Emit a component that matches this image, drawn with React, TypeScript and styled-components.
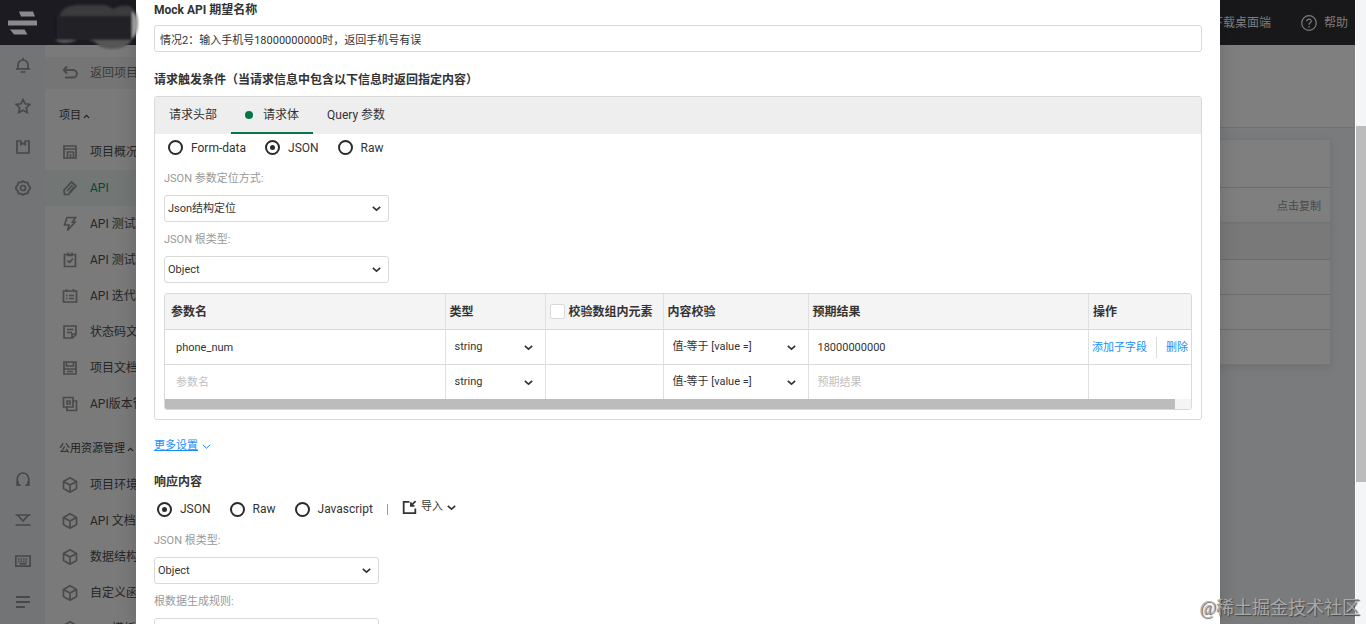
import React from "react";
import styled, { createGlobalStyle, css } from "styled-components";

const GlobalStyle = createGlobalStyle`
  * { box-sizing: border-box; }
  html, body, #root { height: 100%; }
  body {
    margin: 0;
    overflow: hidden;
    background: #797b7c;
    color: #333;
    font: 12px/20px Roboto, "Noto Sans CJK SC", sans-serif;
  }
  button, input, select { font: inherit; color: inherit; }
`;

/* ---------- frame ---------- */

const Page = styled.div`
  position: relative;
  display: flex;
  height: 100%;
  overflow: hidden;
`;

const Workspace = styled.div`
  flex: 1;
  min-width: 0;
  display: flex;
  flex-direction: column;
`;

const TopBar = styled.header`
  flex: none;
  height: 45px;
  display: flex;
  align-items: center;
  justify-content: space-between;
  padding: 0 7px 0 8px;
  background: linear-gradient(90deg, #1c1b21 136px, #18181a 200px);
  color: #7d7d7f;
`;

const TopLinks = styled.div`
  display: flex;
  align-items: center;
  gap: 30px;
`;

const TopButton = styled.button`
  display: flex;
  align-items: center;
  gap: 7px;
  padding: 0;
  border: 0;
  background: none;
`;

const Columns = styled.div`
  flex: 1;
  min-height: 0;
  display: flex;
`;

const Rail = styled.nav`
  flex: none;
  width: 45px;
  display: flex;
  flex-direction: column;
  justify-content: space-between;
  padding-bottom: 1px;
  background: #727475;
`;

const RailButton = styled.button`
  width: 45px;
  height: 41px;
  display: grid;
  place-items: center;
  padding: 0 0 1px;
  border: 0;
  background: none;
  color: #46484a;
`;

const Side = styled.nav`
  flex: none;
  width: 200px;
  overflow: hidden;
  padding-top: 12px;
  background: #7a7a7a;
`;

const SideTitle = styled.button`
  display: flex;
  align-items: center;
  gap: 2px;
  height: 36px;
  margin-top: 9px;
  padding: 0 0 0 14px;
  border: 0;
  background: none;
  font-size: 11px;
  color: #222;
`;

const SideLink = styled.a<{ $state?: "active" | "back" }>`
  display: flex;
  align-items: center;
  gap: 12px;
  height: 36px;
  padding-left: 17px;
  color: #262626;
  text-decoration: none;
  white-space: nowrap;
  svg { color: #4a4a4a; }
  ${(p) => p.$state === "active" && css`background: #727675; color: #044a32;`}
  ${(p) => p.$state === "back" && css`
    height: 32px;
    background: #757575;
    color: #3a3a3a;
  `}
`;

const Main = styled.main`
  flex: 1;
  background: #797b7c;
`;

const MainHead = styled.div`
  height: 83px;
  background: #7f7f7f;
  border-bottom: 1px solid #707070;
`;

const Card = styled.div`
  margin: 11px 24px 0 20px;
  background: #7f7f7f;
  border: 1px solid #757575;
  box-shadow: 0 2px 6px #6f7172;
  color: #484848;
  font-size: 11px;
  & + & { margin-top: 0; }
`;

const CardRow = styled.div<{ $tall?: boolean; $head?: boolean }>`
  display: flex;
  align-items: center;
  justify-content: flex-end;
  height: ${(p) => (p.$tall ? 47 : 35)}px;
  padding: 4px 9px 0 0;
  background: ${(p) => (p.$head ? "#797979" : "none")};
  & + & { border-top: 1px solid #6c6c6c; }
`;

const VTrack = styled.div`
  flex: none;
  width: 11px;
  display: flex;
  flex-direction: column;
  background: #f4f5f6;
  border-left: 1px solid #fff;
`;

const Share = styled.div<{ $n: number; $thumb?: boolean }>`
  flex: ${(p) => p.$n} 0 0;
  background: ${(p) => (p.$thumb ? "#bcbcbc" : "none")};
`;

const Smudge = styled.svg`
  position: absolute;
  left: 45px;
  top: 0;
  z-index: 3;
  pointer-events: none;
`;

const Watermark = styled.div`
  position: absolute;
  right: 6px;
  bottom: 4px;
  z-index: 3;
  font: 18px/24px "Liberation Serif", "Noto Sans CJK SC", serif;
  color: #a9a9a9;
  text-shadow: 1px 1px 1px #444;
`;

/* ---------- drawer ---------- */

const Drawer = styled.section`
  position: absolute;
  inset: 0 146px 0 136px;
  z-index: 2;
  overflow: hidden;
  padding: 0 18px;
  background: #fff;
  box-shadow: 0 0 20px rgba(0, 0, 0, 0.15);
`;

const Title = styled.label`
  display: block;
  padding-bottom: 5px;
  font-weight: 700;
`;

const Heading = styled.h2<{ $first?: boolean }>`
  margin: ${(p) => (p.$first ? "18px 0 6px" : "0")};
  font-size: 12px;
  line-height: 20px;
  font-weight: 700;
`;

const TextInput = styled.input`
  display: block;
  width: 100%;
  height: 27px;
  padding: 0 5px;
  border: 1px solid #d9d9d9;
  border-radius: 3px;
  background: #fff;
  font-size: 11px;
`;

const Panel = styled.div`
  border: 1px solid #d9d9d9;
  border-radius: 3px;
`;

const Tabs = styled.div`
  display: flex;
  height: 37px;
  background: #eee;
`;

const Tab = styled.button<{ $active?: boolean }>`
  display: flex;
  align-items: center;
  gap: 10px;
  padding: 0 14px;
  border: 0;
  border-bottom: 2px solid ${(p) => (p.$active ? "#067647" : "transparent")};
  background: none;
`;

const Dot = styled.span`
  width: 8px;
  height: 8px;
  border-radius: 50%;
  background: #067647;
`;

const PanelBody = styled.div`
  padding: 0 9px 9px;
`;

const RadioRow = styled.div<{ $loose?: boolean }>`
  display: flex;
  align-items: center;
  gap: 19px;
  height: ${(p) => (p.$loose ? 31 : 27)}px;
  padding: ${(p) => (p.$loose ? "3px 0 0 3px" : "0 0 0 4px")};
`;

const RadioLabel = styled.label`
  display: flex;
  align-items: center;
  gap: 8px;
`;

const RadioInput = styled.input`
  appearance: none;
  width: 15px;
  height: 15px;
  margin: 0;
  display: grid;
  place-items: center;
  border: 2px solid #2b2b2b;
  border-radius: 50%;
  &:checked::after {
    content: "";
    width: 5px;
    height: 5px;
    border-radius: 50%;
    background: #2b2b2b;
  }
`;

const Divider = styled.span`
  width: 1px;
  height: 11px;
  margin: 0 -5px;
  background: #999;
`;

const ImportButton = styled.button`
  display: flex;
  align-items: center;
  gap: 4px;
  padding: 0 0 4px;
  border: 0;
  background: none;
  font-size: 11px;
`;

const FieldLabel = styled.label`
  display: block;
  height: 34px;
  line-height: 36px;
  font-size: 11px;
  color: #999;
`;

const SelectBox = styled.span<{ $bare?: boolean }>`
  display: grid;
  align-items: center;
  width: ${(p) => (p.$bare ? "100%" : "225px")};
  svg {
    grid-area: 1 / 1;
    justify-self: end;
    margin-right: ${(p) => (p.$bare ? 12 : 8)}px;
    pointer-events: none;
  }
  select {
    grid-area: 1 / 1;
    appearance: none;
    width: 100%;
    height: 27px;
    padding: 0 3px;
    border: 1px solid #d9d9d9;
    border-radius: 3px;
    background: #fff;
    font-size: 11px;
    ${(p) => p.$bare && css`border: 0; padding: 0 9px;`}
  }
`;

const TableBox = styled.div`
  margin-top: 10px;
  border: 1px solid #d9d9d9;
  border-radius: 3px;
  overflow: hidden;
`;

const Table = styled.table`
  width: 100%;
  table-layout: fixed;
  border-collapse: separate;
  border-spacing: 0;
  font-size: 11px;
  th, td {
    padding: 0;
    border-bottom: 1px solid #d9d9d9;
    border-right: 1px solid #e0e0e0;
    text-align: left;
  }
  th:last-child, td:last-child { border-right: 0; }
  th {
    height: 36px;
    padding-left: 4px;
    background: #f4f4f4;
    font-size: 12px;
  }
  th:first-child { padding-left: 6px; }
  td { height: 35px; }
  tr:last-child td { height: 34px; border-bottom: 0; }
`;

const Col = styled.col<{ $w?: number }>`
  width: ${(p) => (p.$w ? `${p.$w}px` : "auto")};
`;

const CheckLabel = styled.label`
  display: flex;
  align-items: center;
  gap: 4px;
  white-space: nowrap;
`;

const CheckInput = styled.input`
  appearance: none;
  flex: none;
  width: 15px;
  height: 15px;
  margin: 0;
  border: 1px solid #d9d9d9;
  border-radius: 2px;
  background: #fff;
`;

const CellInput = styled.input<{ $wide?: boolean }>`
  display: block;
  width: 100%;
  height: 27px;
  padding: 0 ${(p) => (p.$wide ? 11 : 9)}px;
  border: 0;
  background: none;
  font-size: 11px;
  &::placeholder { color: #bfbfbf; opacity: 1; }
`;

const Actions = styled.div`
  display: flex;
  align-items: center;
  padding-left: 3px;
  white-space: nowrap;
`;

const LinkButton = styled.button`
  padding: 1px 0 0;
  border: 0;
  background: none;
  color: #1890ff;
  font-size: 11px;
  & + & {
    margin-left: 9px;
    padding-left: 9px;
    border-left: 1px solid #ddd;
  }
`;

const HTrack = styled.div`
  display: flex;
  height: 10px;
  background: #f4f4f4;
`;

const More = styled.a`
  display: flex;
  align-items: center;
  gap: 4px;
  height: 52px;
  color: #1890ff;
  font-size: 11px;
  text-decoration: none;
  span { text-decoration: underline; }
`;

/* ---------- icons ---------- */

const shapes: Record<string, React.ReactNode> = {
  bell: <path d="M3 11.500V8a5 5 0 0 1 10 0v3.500M1 11.800h14M8 3V.8M5.500 15h5" />,
  star: <path d="m8 1.500 2 4.300 4.800.6-3.500 3.300.9 4.800L8 12.200l-4.200 2.300.9-4.800L1.200 6.400 6 5.800z" />,
  box: <path d="M5.500 2H2v12h12V2h-3.500M5.800 1.500v4L8 4.300l2.200 1.200v-4" />,
  gear: <><path d="M8 1l2 1.500 2.600-.1.6 2.500L15 7v2l-1.800 2-.6 2.600-2.600-.1L8 15l-2-1.500-2.600.1-.6-2.600L1 9V7l1.800-2.100.6-2.500 2.600.1z" /><circle cx="8" cy="8" r="2.500" /></>,
  headset: <path d="M5.500 14.200H2.200V8a5.800 6 0 0 1 11.600 0v6.200h-3.300M3 10v4M13 10v4" />,
  down: <path d="M.5 3h15M3 3.500l5 5.500 5-5.500M.5 13h15" />,
  keyboard: <><path d="M.8 3h14.400v10.200H.8z" /><path d="M3 6h10M3 8.300h10" strokeDasharray="1.500 1" /><path d="M4.500 10.700h7" /></>,
  lines: <path d="M1 3h14M1 8h14M1 13h9" strokeWidth="2" />,
  back: <path d="M5 1.500 1.800 5 5 8.500M2 5h9a3.800 3.800 0 0 1 0 7.600H3" strokeWidth="2" />,
  overview: <path d="M2 2h12v12H2zM2 5h12M5.500 14V8M8.500 14v-4M11.500 14V8M4.500 8H12" />,
  link: <path d="m2 10 7.500-8 4.500 4-7.500 8.500H2.500zM5 11l5.500-6M7.500 12.500 12 7" />,
  bolt: <path d="M5 1.500h8.500L10.500 6H13L5.500 14.500 7 9H2.500z" />,
  clip: <path d="M2.500 2.500h11v12h-11zM6 .5v3h4v-3M5.500 8.500l2 2L11 6.500" />,
  plan: <path d="M1.500 3h13v11h-13zM4.500 1v3M11.500 1v3M4 7.500h1.500M7 7.500h5M4 10.500h1.500M7 10.500h5" />,
  note: <path d="M2 2h12v8.500L10.500 14H2zM5 5.500h6.500M5 8.500h5M14 10h-4v4" />,
  doc: <path d="M2 2h12v12H2zM4.500 2v4h7V2M2 9h12M5 11.500h6" />,
  copy: <path d="M1.500 1.500h9.500v9.500H1.500zM11 5h3.500v9.500H5V11M5 5h3v3H5z" />,
  cube: <path d="m8 .8 6.500 3.600v7.200L8 15.200l-6.500-3.600V4.400zM1.500 4.400 8 8l6.500-3.600M8 8v7" />,
  help: <><circle cx="8" cy="8" r="7.300" /><path d="M5.800 6.200c.2-3 4.600-2.700 4.400 0C10.100 7.700 8 7.800 8 9.700M8 11v1.500" /></>,
  import: <path d="M8 2H1.800v12h12.400V9M14.500 1.200 10 5.800M9.500 2.500v3.800h3.800" strokeWidth="1.900" />,
};

const Icon = ({ name, size = 16, weight = 1.7 }: { name: string; size?: number; weight?: number }) => (
  <svg width={size} height={size} viewBox="0 0 16 16" fill="none" stroke="currentColor" strokeWidth={weight} aria-hidden="true">
    {shapes[name]}
  </svg>
);

const Chevron = ({ up, thin }: { up?: boolean; thin?: boolean }) => (
  <svg width={up ? 7 : 9} height={up ? 7 : 9} viewBox="0 0 9 9" fill="none" stroke="currentColor" strokeWidth={thin ? 1 : 1.6} aria-hidden="true">
    <path d={up ? "M1.200 6.200 4.500 3l3.300 3.200" : "M.8 2.800 4.500 6.200l3.700-3.400"} />
  </svg>
);

const Logo = () => (
  <svg width="30" height="26" viewBox="0 0 30 26" fill="#8b8b8d" aria-hidden="true">
    <path d="M11 1.500h14l2 5H13zM0 10.500h29v5H0zM2 19.500h14.500l3 5H6z" />
  </svg>
);

/* ---------- parts ---------- */

const Select = ({ id, value, bare, label }: { id?: string; value: string; bare?: boolean; label?: string }) => (
  <SelectBox $bare={bare}>
    <select id={id} aria-label={label} defaultValue={value}>
      <option>{value}</option>
    </select>
    <Chevron />
  </SelectBox>
);

const Radio = ({ group, text, checked }: { group: string; text: string; checked?: boolean }) => (
  <RadioLabel>
    <RadioInput type="radio" name={group} defaultChecked={checked} />
    {text}
  </RadioLabel>
);

const projectLinks = [
  ["overview", "项目概况"],
  ["link", "API"],
  ["bolt", "API 测试"],
  ["clip", "API 测试"],
  ["plan", "API 迭代"],
  ["note", "状态码文档"],
  ["doc", "项目文档"],
  ["copy", "API版本管理"],
];
const sharedLinks = ["项目环境", "API 文档", "数据结构", "自定义函数", "API 模板"];

const rows = [
  { name: "phone_num", expected: "18000000000", actions: true },
  { name: "", expected: "", actions: false },
];

export default function App() {
  return (
    <Page>
      <GlobalStyle />
      <Workspace>
        <TopBar>
          <Logo />
          <TopLinks>
            <TopButton>下载桌面端</TopButton>
            <TopButton><Icon name="help" weight={1.2} />帮助</TopButton>
          </TopLinks>
        </TopBar>
        <Columns>
          <Rail>
            <div>
              {["bell", "star", "box", "gear"].map((n) => (
                <RailButton key={n} aria-label={n}><Icon name={n} /></RailButton>
              ))}
            </div>
            <div>
              {["headset", "down", "keyboard", "lines"].map((n) => (
                <RailButton key={n} aria-label={n}><Icon name={n} /></RailButton>
              ))}
            </div>
          </Rail>
          <Side>
            <SideLink href="#" $state="back"><Icon name="back" />返回项目</SideLink>
            <SideTitle>项目<Chevron up /></SideTitle>
            {projectLinks.map(([icon, text], i) => (
              <SideLink key={i} href="#" $state={text === "API" ? "active" : undefined}>
                <Icon name={icon} />{text}
              </SideLink>
            ))}
            <SideTitle>公用资源管理<Chevron up /></SideTitle>
            {sharedLinks.map((text) => (
              <SideLink key={text} href="#"><Icon name="cube" />{text}</SideLink>
            ))}
          </Side>
          <Main>
            <MainHead />
            <Card>
              <CardRow $tall />
              <CardRow>点击复制</CardRow>
            </Card>
            <Card>
              <CardRow $head />
              <CardRow />
              <CardRow />
              <CardRow />
            </Card>
          </Main>
        </Columns>
      </Workspace>

      <VTrack>
        <Share $n={126} />
        <Share $n={356} $thumb />
        <Share $n={142} />
      </VTrack>

      <Smudge width="96" height="52" viewBox="0 0 96 52" aria-hidden="true">
        <defs>
          <filter id="soft"><feGaussianBlur stdDeviation="0.800" /></filter>
        </defs>
        <g filter="url(#soft)">
          <path d="M15 14Q18 6 32 5h28q6 2 8 4 8-5 17-3 7 5 8 16 0 12-7 18H62Q48 36 38 28L15 20z" fill="#3b3a3d" />
          <path d="M87 11q6 6 6 14t-6 14z" fill="#9a9a9a" />
          <path d="M10 40h22q-6 3-12 3-6 0-10-3z" fill="#5a5a5b" />
          <path d="M44 40h43q-6 9-20 9-10 0-14-4-3-4-9-5z" fill="#555554" />
          <path d="M12 16h75v24H12z" fill="#242328" />
        </g>
      </Smudge>

      <Drawer>
        <Title htmlFor="mock-name">Mock API 期望名称</Title>
        <TextInput id="mock-name" defaultValue="情况2：输入手机号18000000000时，返回手机号有误" />
        <Heading $first>请求触发条件（当请求信息中包含以下信息时返回指定内容）</Heading>

        <Panel>
          <Tabs>
            <Tab>请求头部</Tab>
            <Tab $active><Dot />请求体</Tab>
            <Tab>Query 参数</Tab>
          </Tabs>
          <PanelBody>
            <RadioRow>
              <Radio group="body" text="Form-data" />
              <Radio group="body" text="JSON" checked />
              <Radio group="body" text="Raw" />
            </RadioRow>
            <FieldLabel htmlFor="locate">JSON 参数定位方式:</FieldLabel>
            <Select id="locate" value="Json结构定位" />
            <FieldLabel htmlFor="root-type">JSON 根类型:</FieldLabel>
            <Select id="root-type" value="Object" />

            <TableBox>
              <Table>
                <colgroup>
                  <Col /><Col $w={100} /><Col $w={118} /><Col $w={145} /><Col /><Col $w={102} />
                </colgroup>
                <thead>
                  <tr>
                    <th>参数名</th>
                    <th>类型</th>
                    <th><CheckLabel><CheckInput type="checkbox" />校验数组内元素</CheckLabel></th>
                    <th>内容校验</th>
                    <th>预期结果</th>
                    <th>操作</th>
                  </tr>
                </thead>
                <tbody>
                  {rows.map((r, i) => (
                    <tr key={i}>
                      <td><CellInput $wide aria-label="参数名" placeholder="参数名" defaultValue={r.name} /></td>
                      <td><Select bare label="类型" value="string" /></td>
                      <td />
                      <td><Select bare label="内容校验" value="值-等于 [value =]" /></td>
                      <td><CellInput aria-label="预期结果" placeholder="预期结果" defaultValue={r.expected} /></td>
                      <td>
                        {r.actions && (
                          <Actions>
                            <LinkButton>添加子字段</LinkButton>
                            <LinkButton>删除</LinkButton>
                          </Actions>
                        )}
                      </td>
                    </tr>
                  ))}
                </tbody>
              </Table>
              <HTrack>
                <Share $n={1010} $thumb />
                <Share $n={16} />
              </HTrack>
            </TableBox>
          </PanelBody>
        </Panel>

        <More href="#"><span>更多设置</span><Chevron thin /></More>

        <Heading>响应内容</Heading>
        <RadioRow $loose>
          <Radio group="response" text="JSON" checked />
          <Radio group="response" text="Raw" />
          <Radio group="response" text="Javascript" />
          <Divider />
          <ImportButton><Icon name="import" size={15} />导入<Chevron /></ImportButton>
        </RadioRow>
        <FieldLabel htmlFor="response-type">JSON 根类型:</FieldLabel>
        <Select id="response-type" value="Object" />
        <FieldLabel htmlFor="rule">根数据生成规则:</FieldLabel>
        <Select id="rule" value="" />
      </Drawer>

      <Watermark>@稀土掘金技术社区</Watermark>
    </Page>
  );
}
